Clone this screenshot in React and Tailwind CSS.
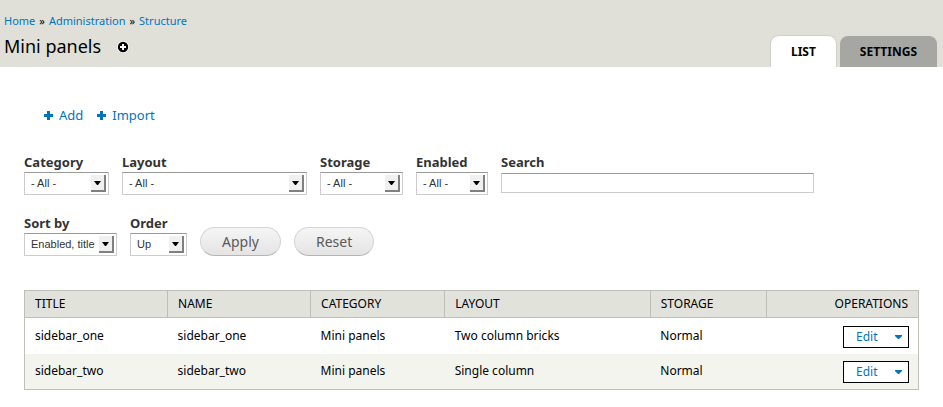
import React from "react";

const filters = [
  { id: "category", label: "Category", options: ["- All -", "Mini panels"], width: "w-[85px]" },
  { id: "layout", label: "Layout", options: ["- All -", "Single column", "Two column bricks"], width: "w-[185px]" },
  { id: "storage", label: "Storage", options: ["- All -", "Normal"], width: "w-[83px]" },
  { id: "enabled", label: "Enabled", options: ["- All -", "Enabled", "Disabled"], width: "w-[72px]" },
];

const sorts = [
  { id: "sort", label: "Sort by", options: ["Enabled, title", "Title", "Name"], width: "w-[93px]" },
  { id: "order", label: "Order", options: ["Up", "Down"], width: "w-[57px]" },
];

const rows = [
  { name: "sidebar_one", category: "Mini panels", layout: "Two column bricks", storage: "Normal" },
  { name: "sidebar_two", category: "Mini panels", layout: "Single column", storage: "Normal" },
];

const labelClass = "text-[13px] leading-4 font-bold text-[#333]";
const fieldBorder = "border border-[#ccc] border-t-[#999] bg-white";

function PlusIcon() {
  return (
    <svg className="size-[9px]" viewBox="0 0 9 9" fill="#0074bd" aria-hidden="true">
      <path d="M3 0h3v3h3v3H6v3H3V6H0V3h3z" />
    </svg>
  );
}

function SelectField({ id, label, options, width }) {
  return (
    <div className={width}>
      <label htmlFor={id} className={`block whitespace-nowrap ${labelClass}`}>{label}</label>
      <div className="relative mt-0.5">
        <select
          id={id}
          className={`block h-[23px] w-full appearance-none pl-1.5 font-['Liberation_Sans',Arial,sans-serif] text-[11px] text-[#333] ${fieldBorder}`}
        >
          {options.map((o) => <option key={o}>{o}</option>)}
        </select>
        <span className="pointer-events-none absolute top-[3px] right-[3px] flex h-[17px] w-[15px] items-center justify-end border-r-2 border-b-2 border-[#808080] bg-[#f0f0f0] pr-[3px]">
          <svg className="h-1 w-[7px]" viewBox="0 0 7 4" fill="#000" aria-hidden="true">
            <path d="M0 0h7L4 4H3z" />
          </svg>
        </span>
      </div>
    </div>
  );
}

function PillButton({ children }) {
  return (
    <button
      type="button"
      className="h-[29px] rounded-full border border-[#d5d5d5] border-b-[#b4b4b4] bg-linear-to-b from-[#f5f5f5] to-[#e4e4e4] px-[21px] text-[14px] leading-5 text-[#5a5a5a]"
    >
      {children}
    </button>
  );
}

const linkClass = "text-[#0074bd] hover:underline";

export default function App() {
  return (
    <div className="bg-white font-['Noto_Sans','Open_Sans',sans-serif] text-black">
      <header className="flex items-end justify-between bg-[#e0e0d8] pt-3 pr-1.5 pl-1">
        <div className="pb-2">
          <nav aria-label="Breadcrumb" className="flex gap-1 text-[11px] leading-[18px]">
            <a href="#home" className={linkClass}>Home</a>
            <span>»</span>
            <a href="#administration" className={linkClass}>Administration</a>
            <span>»</span>
            <a href="#structure" className={linkClass}>Structure</a>
          </nav>
          <div className="mt-1 flex items-center gap-4">
            <h1 className="text-[18px] leading-[25px]">Mini panels</h1>
            <a href="#shortcut" aria-label="Add to shortcuts">
              <svg className="size-3" viewBox="0 0 12 12" aria-hidden="true">
                <circle cx="6" cy="6" r="6" fill="#fff" />
                <circle cx="6" cy="6" r="5.2" fill="#000" />
                <path d="M5 3h2v2h2v2H7v2H5V7H3V5h2z" fill="#fff" />
              </svg>
            </a>
          </div>
        </div>
        <nav aria-label="Tabs" className="flex gap-1 text-[12px] leading-[31px] font-bold">
          <a href="#list" className="rounded-t-lg bg-white px-5 shadow-[0_0_1px_1px_#cfcfc7] [clip-path:inset(-2px_-2px_0_-2px)]">LIST</a>
          <a href="#settings" className="rounded-t-lg bg-[#a6a7a2] px-5">SETTINGS</a>
        </nav>
      </header>

      <main className="px-6 pt-[39px]">
        <ul className="flex gap-3.5 pl-5 text-[13px] leading-[18px]">
          {["Add", "Import"].map((t) => (
            <li key={t}>
              <a href={`#${t.toLowerCase()}`} className="flex items-center gap-1.5 text-[#0074bd]">
                <PlusIcon />{t}
              </a>
            </li>
          ))}
        </ul>

        <form onSubmit={(e) => e.preventDefault()}>
          <div className="mt-[30px] flex gap-[13px]">
            {filters.map((f) => <SelectField key={f.id} {...f} />)}
            <div className="w-[35%]">
              <label htmlFor="search" className={`block ${labelClass}`}>Search</label>
              <input id="search" type="text" className={`mt-[3px] block h-5 w-full px-1 text-[11px] ${fieldBorder}`} />
            </div>
          </div>
          <div className="mt-5 flex items-end gap-[13px]">
            {sorts.map((f) => <SelectField key={f.id} {...f} />)}
            <PillButton>Apply</PillButton>
            <PillButton>Reset</PillButton>
          </div>
        </form>

        <table className="mt-[34px] w-full table-fixed border-collapse border border-[#bebfb9] text-left text-[12px] leading-[18px]">
          <colgroup>
            <col className="w-[16%]" />
            <col className="w-[16%]" />
            <col className="w-[15%]" />
            <col className="w-[23%]" />
            <col className="w-[13%]" />
            <col className="w-[17%]" />
          </colgroup>
          <thead>
            <tr className="h-[27px] bg-[#e1e2dc]">
              {["TITLE", "NAME", "CATEGORY", "LAYOUT", "STORAGE"].map((h) => (
                <th key={h} className="border border-[#bebfb9] px-2.5 font-normal">{h}</th>
              ))}
              <th className="border border-[#bebfb9] px-2.5 text-right font-normal">OPERATIONS</th>
            </tr>
          </thead>
          <tbody>
            {rows.map((r) => (
              <tr key={r.name} className="h-9 even:bg-[#f3f4ee]">
                <td className="px-2.5">{r.name}</td>
                <td className="px-2.5">{r.name}</td>
                <td className="px-2.5">{r.category}</td>
                <td className="px-2.5">{r.layout}</td>
                <td className="px-2.5">{r.storage}</td>
                <td className="px-[9px] pt-0.5">
                  <div className="ml-auto flex h-[22px] w-[66px] items-center justify-between border border-black bg-white pr-1.5 pl-3 text-[#0074bd]">
                    <a href={`#edit-${r.name}`}>Edit</a>
                    <button type="button" aria-label={`More operations for ${r.name}`}>
                      <svg className="h-1 w-[7px]" viewBox="0 0 7 4" fill="#0074bd" aria-hidden="true">
                        <path d="M0 0h7v1L4 4H3L0 1z" />
                      </svg>
                    </button>
                  </div>
                </td>
              </tr>
            ))}
          </tbody>
        </table>
      </main>
    </div>
  );
}
